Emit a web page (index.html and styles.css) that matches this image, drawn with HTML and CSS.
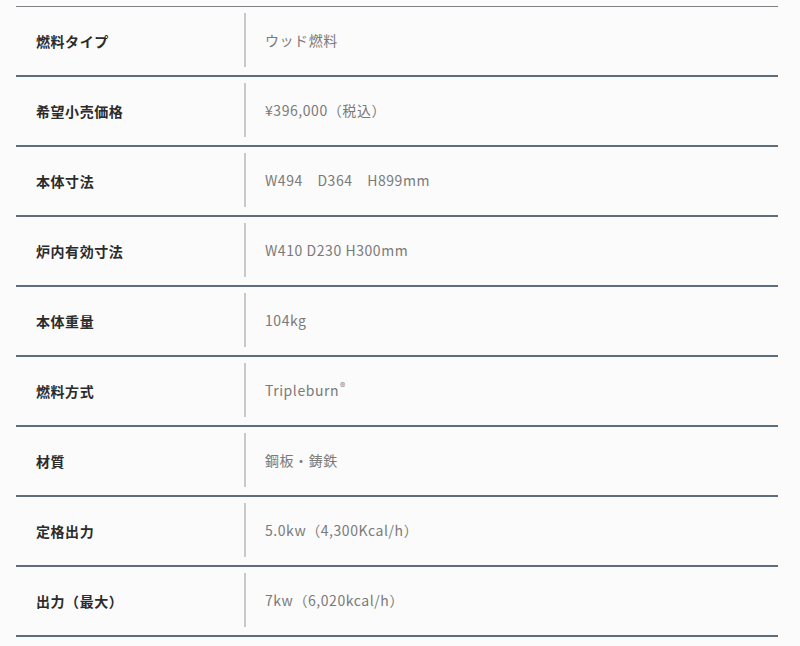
FILE: index.html
```html
<!DOCTYPE html>
<html lang="ja">
<head>
<meta charset="utf-8">
<link rel="stylesheet" href="styles.css">
</head>
<body>
<div class="spec">
  <div class="row"><div class="label">燃料タイプ</div><div class="value">ウッド燃料</div></div>
  <div class="row"><div class="label">希望小売価格</div><div class="value">¥396,000（税込）</div></div>
  <div class="row"><div class="label">本体寸法</div><div class="value">W494　D364　H899mm</div></div>
  <div class="row"><div class="label">炉内有効寸法</div><div class="value">W410 D230 H300mm</div></div>
  <div class="row"><div class="label">本体重量</div><div class="value">104kg</div></div>
  <div class="row"><div class="label">燃料方式</div><div class="value">Tripleburn<span class="reg">®</span></div></div>
  <div class="row"><div class="label">材質</div><div class="value">鋼板・鋳鉄</div></div>
  <div class="row"><div class="label">定格出力</div><div class="value">5.0kw（4,300Kcal/h）</div></div>
  <div class="row"><div class="label">出力（最大）</div><div class="value">7kw（6,020kcal/h）</div></div>
</div>
</body>
</html>
```
FILE: styles.css
```css
html, body {
  margin: 0;
  padding: 0;
  background: #fbfbfb;
}
body {
  font-family: "Noto Sans CJK JP", "Noto Sans", sans-serif;
  padding: 6px 22px 0 16px;
}
.spec {
  width: 762px;
  border-bottom: 2px solid #5e6d7e;
}
.row {
  display: grid;
  grid-template-columns: 228px 1fr;
  height: 68px;
  border-top: 2px solid #5e6d7e;
  align-items: stretch;
}
.row:first-child {
  height: 68px;
  border-top: 1px solid #7d8084;
}
.label {
  display: flex;
  align-items: center;
  padding-left: 20px;
  font-size: 14px;
  font-weight: bold;
  color: #2b2b2b;
  letter-spacing: 0.04em;
}
.value {
  display: flex;
  align-items: center;
  margin: 6px 0 8px;
  border-left: 2px solid #c9c9c9;
  padding-left: 19px;
  font-size: 14px;
  color: #7a7a7a;
  letter-spacing: 0.04em;
}
.reg {
  font-size: 11px;
  line-height: 1;
  position: relative;
  top: -4px;
  margin-left: 1px;
}
```
